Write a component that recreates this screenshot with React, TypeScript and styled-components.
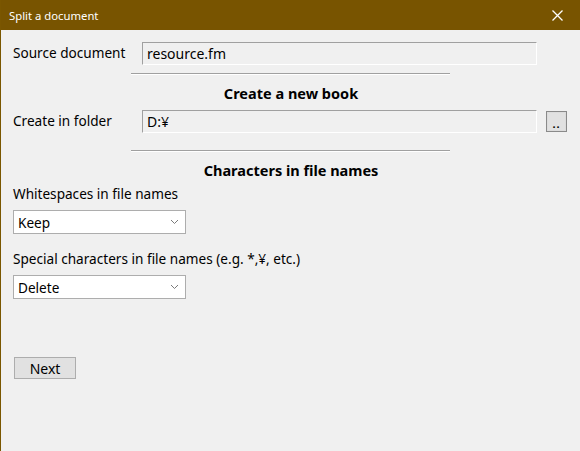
import React from 'react';
import styled, { createGlobalStyle } from 'styled-components';

const GlobalStyle = createGlobalStyle`
  html, body {
    margin: 0;
    padding: 0;
    background: #f0f0f0;
  }
  body {
    font-family: "Noto Sans", "Open Sans", Arial, sans-serif;
  }
`;

const Window = styled.div`
  width: 580px;
  height: 451px;
  box-sizing: border-box;
  border-left: 1px solid #7a5600;
  background: #f0f0f0;
  display: flex;
  flex-direction: column;
  overflow: hidden;
`;

const TitleBar = styled.div`
  height: 30px;
  background: #785400;
  display: flex;
  align-items: center;
  justify-content: space-between;
  padding: 0 0 0 8px;
  color: #ffffff;
  font-size: 11.3px;
`;

const CloseButton = styled.div`
  width: 46px;
  height: 30px;
  display: flex;
  align-items: center;
  justify-content: center;
`;

const Body = styled.div`
  padding: 11px 12px 0 12px;
  display: flex;
  flex-direction: column;
  color: #000;
  font-size: 13.6px;
`;

const FieldRow = styled.div`
  display: grid;
  grid-template-columns: 129px 395px 30px;
  align-items: center;
  height: 24px;
`;

const Label = styled.span`
  line-height: 20px;
`;

const ReadOnlyField = styled.div`
  height: 23px;
  box-sizing: border-box;
  border-top: 1px solid #a0a0a0;
  border-left: 1px solid #a0a0a0;
  border-right: 1px solid #ffffff;
  border-bottom: 1px solid #ffffff;
  background: #f0f0f0;
  padding: 0 4px;
  display: flex;
  align-items: center;
  font-size: 14px;
`;

const BrowseButton = styled.div`
  justify-self: end;
  width: 21px;
  height: 21px;
  box-sizing: border-box;
  border: 1px solid #8a8a8a;
  box-shadow: inset 0 0 0 1px #dcdcdc;
  background: #e1e1e1;
  display: flex;
  align-items: flex-end;
  justify-content: center;
  font-size: 11px;
  line-height: 14px;
  font-weight: bold;
  letter-spacing: 1px;
`;

const Separator = styled.div<{ $top: number }>`
  margin: ${({ $top }) => `${$top}px`} 0 0 118px;
  width: 319px;
  height: 1px;
  background: #a0a0a0;
  border-bottom: 1px solid #ffffff;
`;

const Heading = styled.div`
  margin: 8px 0 0 0;
  width: 556px;
  text-align: center;
  font-weight: bold;
  font-size: 14.5px;
  line-height: 20px;
`;

const ComboLabel = styled.div<{ $top: number }>`
  margin-top: ${({ $top }) => `${$top}px`};
  line-height: 20px;
`;

const Combo = styled.div`
  margin-top: 6px;
  width: 173px;
  height: 24px;
  box-sizing: border-box;
  border: 1px solid #adadad;
  background: #ffffff;
  display: flex;
  align-items: center;
  justify-content: space-between;
  padding: 0 6px 0 4px;
`;

const NextButton = styled.div`
  margin: 58px 0 0 1px;
  width: 62px;
  height: 22px;
  box-sizing: border-box;
  border: 1px solid #adadad;
  background: #e1e1e1;
  display: flex;
  align-items: center;
  justify-content: center;
  font-size: 14px;
`;

const Chevron = () => (
  <svg width="9" height="6" viewBox="0 0 9 6">
    <path d="M1 1 L4.5 4.5 L8 1" fill="none" stroke="#7a7a7a" strokeWidth="1" />
  </svg>
);

const App: React.FC = () => {
  return (
    <>
      <GlobalStyle />
      <Window>
        <TitleBar>
          <span>Split a document</span>
          <CloseButton>
            <svg width="11" height="11" viewBox="0 0 11 11">
              <path d="M0.5 0.5 L10.5 10.5 M10.5 0.5 L0.5 10.5" stroke="#ffffff" strokeWidth="1.3" />
            </svg>
          </CloseButton>
        </TitleBar>
        <Body>
          <FieldRow>
            <Label>Source document</Label>
            <ReadOnlyField>resource.fm</ReadOnlyField>
          </FieldRow>
          <Separator $top={8} />
          <Heading>Create a new book</Heading>
          <FieldRow style={{ marginTop: 6 }}>
            <Label>Create in folder</Label>
            <ReadOnlyField>D:¥</ReadOnlyField>
            <BrowseButton>..</BrowseButton>
          </FieldRow>
          <Separator $top={17} />
          <Heading>Characters in file names</Heading>
          <ComboLabel $top={4}>Whitespaces in file names</ComboLabel>
          <Combo>
            <span>Keep</span>
            <Chevron />
          </Combo>
          <ComboLabel $top={15}>Special characters in file names (e.g. *,¥, etc.)</ComboLabel>
          <Combo>
            <span>Delete</span>
            <Chevron />
          </Combo>
          <NextButton>Next</NextButton>
        </Body>
      </Window>
    </>
  );
};

export default App;
